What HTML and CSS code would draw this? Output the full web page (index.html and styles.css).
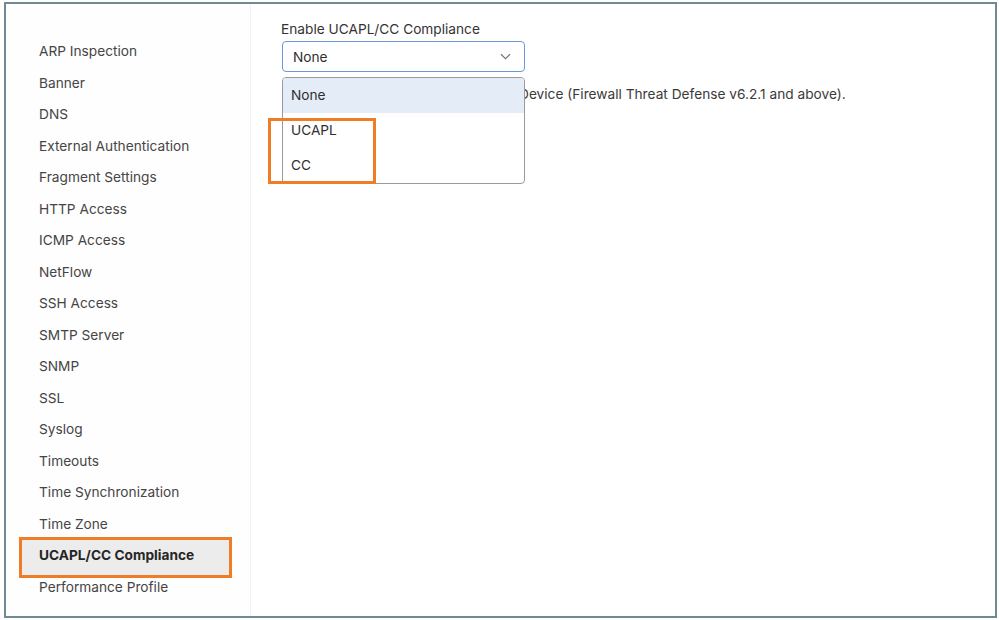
FILE: index.html
```html
<!DOCTYPE html>
<html lang="en">
<head>
    <meta charset="UTF-8">
    <meta name="viewport" content="width=device-width, initial-scale=1.0">
    <title>Platform Settings - UCAPL/CC Compliance</title>
    <link rel="stylesheet" href="styles.css">
</head>
<body>
    <div class="frame">
        <aside class="sidebar">
            <ul class="menu">
                <li>ARP Inspection</li>
                <li>Banner</li>
                <li>DNS</li>
                <li>External Authentication</li>
                <li>Fragment Settings</li>
                <li>HTTP Access</li>
                <li>ICMP Access</li>
                <li>NetFlow</li>
                <li>SSH Access</li>
                <li>SMTP Server</li>
                <li>SNMP</li>
                <li>SSL</li>
                <li>Syslog</li>
                <li>Timeouts</li>
                <li>Time Synchronization</li>
                <li>Time Zone</li>
                <li class="active">UCAPL/CC Compliance</li>
                <li>Performance Profile</li>
            </ul>
        </aside>

        <main class="content">
            <label class="field-label" for="compliance">Enable UCAPL/CC Compliance</label>
            <div class="select" id="compliance">
                <span>None</span>
                <svg class="chevron" width="11" height="7" viewBox="0 0 11 7">
                    <path d="M1 1.2 L5.5 5.6 L10 1.2" fill="none" stroke="#777777" stroke-width="1.2"/>
                </svg>
            </div>
            <!-- o começo da frase fica escondido atrás da lista aberta -->
            <p class="note">Device (Firewall Threat Defense v6.2.1 and above).</p>

            <ul class="dropdown">
                <li class="selected">None</li>
                <li>UCAPL</li>
                <li>CC</li>
            </ul>
            <div class="mark"></div>
        </main>
    </div>
</body>
</html>
```

FILE: styles.css
```css
body {
    margin: 0;
    background-color: #ffffff;
    font-family: 'Inter', 'Liberation Sans', sans-serif;
}

.frame {
    margin: 2px 0 0 4px;
    width: 993px;
    height: 616px;
    box-sizing: border-box;
    border: 2px solid #6f8a95;
    display: flex;
}

/* Menu lateral */
.sidebar {
    width: 244px;
    border-right: 1px solid #f1f2f3;
    background-color: #fefefe;
    flex-shrink: 0;
}

.menu {
    list-style: none;
    margin: 0;
    padding: 32px 0 0 0;
}

.menu li {
    height: 31.5px;
    line-height: 31.5px;
    padding-left: 33px;
    font-size: 13.7px;
    color: #454545;
    position: relative;
    z-index: 0;
}

.menu li.active {
    font-weight: 700;
    color: #262626;
}

.menu li.active::after {
    content: '';
    position: absolute;
    left: 13px;
    width: 213px;
    top: -3px;
    bottom: -6px;
    box-sizing: border-box;
    border: 3px solid #ee7d26;
    background-color: #ececec;
    z-index: -1;
}

/* Conteúdo */
.content {
    flex: 1;
    position: relative;
    padding: 16px 0 0 30px;
}

.field-label {
    display: block;
    font-size: 13.7px;
    line-height: 18px;
    color: #333333;
}

.select {
    margin: 3px 0 0 1px;
    width: 243px;
    height: 31px;
    box-sizing: border-box;
    border: 1.5px solid #6a98d8;
    border-radius: 4px;
    display: flex;
    align-items: center;
    justify-content: space-between;
    padding: 0 13px 0 10px;
    font-size: 13.7px;
    color: #2f2f2f;
}

.note {
    margin: 13px 0 0 238px;
    font-size: 13.7px;
    line-height: 18px;
    color: #3a3a3a;
    white-space: nowrap;
}

.dropdown {
    position: absolute;
    left: 31px;
    top: 73px;
    width: 243px;
    margin: 0;
    padding: 0;
    list-style: none;
    box-sizing: border-box;
    border: 1.5px solid #9a9a9a;
    border-radius: 4px;
    background-color: #ffffff;
    overflow: hidden;
}

.dropdown li {
    height: 35px;
    line-height: 35px;
    padding-left: 8px;
    font-size: 13.7px;
    color: #2f2f2f;
}

.dropdown li.selected {
    background-color: #e4ecf8;
}

/* destaque laranja sobre as opções */
.mark {
    position: absolute;
    left: 17px;
    top: 114px;
    width: 108px;
    height: 66px;
    box-sizing: border-box;
    border: 3px solid #ee7d26;
}
```
